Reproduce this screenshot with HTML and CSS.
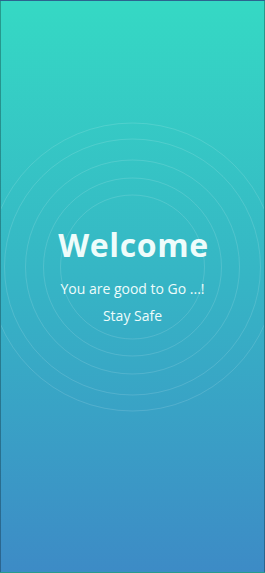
FILE: index.html
```html
<!DOCTYPE html>
<html lang="en">
<head>
    <meta charset="UTF-8">
    <meta name="viewport" content="width=device-width, initial-scale=1.0">
    <title>Welcome</title>
    <link rel="stylesheet" href="styles.css">
</head>
<body>
    <div class="screen">
        <!-- ripple rings behind the greeting -->
        <svg class="rings" width="265" height="573" viewBox="0 0 265 573">
            <circle cx="132.5" cy="267" r="72" />
            <circle cx="132.5" cy="267" r="89" />
            <circle cx="132.5" cy="267" r="107" />
            <circle cx="132.5" cy="267" r="128" />
            <circle cx="132.5" cy="267" r="144" />
        </svg>

        <div class="greeting">
            <h1 class="title">Welcome</h1>
            <p class="subtitle">You are good to Go ...!</p>
            <p class="note">Stay Safe</p>
        </div>
    </div>
</body>
</html>
```

FILE: styles.css
```css
html, body {
    margin: 0;
    padding: 0;
}
body {
    font-family: "Open Sans", "Noto Sans", sans-serif;
    background: #3a8fc5;
}
.screen {
    position: relative;
    width: 265px;
    height: 573px;
    box-sizing: border-box;
    border: 1px solid rgba(0,0,0,0.28);
    background: linear-gradient(to bottom, #35d9c4 0%, #36b4c5 50%, #3d8bc6 100%);
    overflow: hidden;
}
.rings {
    position: absolute;
    top: -1px;
    left: -1px;
}
.rings circle {
    fill: none;
    stroke: rgba(255,255,255,0.13);
    stroke-width: 1;
}
.greeting {
    position: relative;
    display: flex;
    flex-direction: column;
    align-items: center;
    padding-top: 223px;
    color: #eefcfb;
}
.title {
    margin: 0;
    font-size: 32px;
    line-height: 42px;
    font-weight: 700;
    letter-spacing: 0.6px;
    padding-left: 2px;
}
.subtitle {
    margin: 13px 0 0;
    font-size: 14px;
    line-height: 20px;
}
.note {
    margin: 7px 0 0;
    font-size: 14px;
    line-height: 20px;
}
```
